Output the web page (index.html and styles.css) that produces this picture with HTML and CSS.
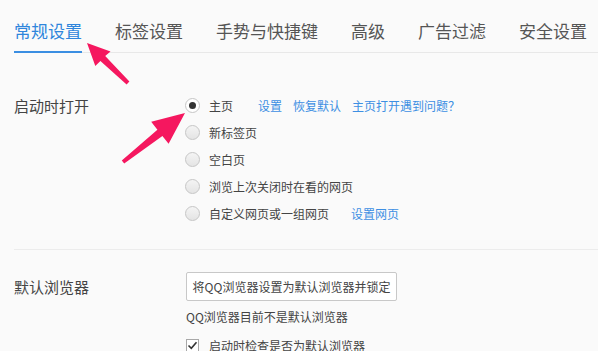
FILE: index.html
```html
<!DOCTYPE html>
<html lang="zh-CN">
<head>
<meta charset="utf-8">
<link rel="stylesheet" href="styles.css">
</head>
<body>
<div class="page">
  <nav class="tabs">
    <span class="tab active">常规设置</span>
    <span class="tab">标签设置</span>
    <span class="tab">手势与快捷键</span>
    <span class="tab">高级</span>
    <span class="tab">广告过滤</span>
    <span class="tab">安全设置</span>
  </nav>

  <section class="section startup">
    <div class="label">启动时打开</div>
    <div class="options">
      <div class="row"><span class="radio checked"></span><span class="opt">主页</span><span class="links"><a class="link">设置</a><a class="link">恢复默认</a><a class="link">主页打开遇到问题？</a></span></div>
      <div class="row"><span class="radio"></span><span class="opt">新标签页</span></div>
      <div class="row"><span class="radio"></span><span class="opt">空白页</span></div>
      <div class="row"><span class="radio"></span><span class="opt">浏览上次关闭时在看的网页</span></div>
      <div class="row"><span class="radio"></span><span class="opt">自定义网页或一组网页</span><span class="links wide"><a class="link">设置网页</a></span></div>
    </div>
  </section>

  <section class="section browser">
    <div class="label">默认浏览器</div>
    <div class="options">
      <button class="btn">将QQ浏览器设置为默认浏览器并锁定</button>
      <div class="note">QQ浏览器目前不是默认浏览器</div>
      <div class="check-row"><span class="checkbox"><svg width="11" height="11" viewBox="0 0 11 11"><path d="M1.5 5.5 L4.3 8.3 L9.5 2.2" fill="none" stroke="#333" stroke-width="1.6"/></svg></span><span class="opt">启动时检查是否为默认浏览器</span></div>
    </div>
  </section>

  <svg class="arrows" width="598" height="351" viewBox="0 0 598 351">
    <polygon fill="#f5175f" points="87,43 110.5,51.5 105.2,55.9 129.4,81.6 126.6,84.4 100.4,60.9 95.3,66"/>
    <polygon fill="#f5175f" points="185,113 168.6,143.8 162.4,135.9 124.2,163.6 121.8,160.4 157.4,129.7 151.2,121.8"/>
  </svg>
</div>
</body>
</html>
```

FILE: styles.css
```css
html, body {
  margin: 0;
  padding: 0;
  background: #fafafa;
}
.page {
  position: relative;
  width: 598px;
  height: 351px;
  overflow: hidden;
  font-family: "Noto Sans CJK SC", "Microsoft YaHei", sans-serif;
  color: #444;
}
.tabs {
  display: flex;
  gap: 33px;
  margin-left: 14px;
  padding-top: 21px;
  border-bottom: 1px solid #e8e8e8;
}
.tab {
  font-size: 17px;
  line-height: 20px;
  color: #555;
  padding-bottom: 10px;
  border-bottom: 2px solid transparent;
  margin-bottom: -1px;
  white-space: nowrap;
}
.tab.active {
  color: #2f86dc;
  border-bottom-color: #3a8ee2;
}
.section {
  display: flex;
  margin-left: 14px;
}
.startup {
  padding-top: 39px;
  padding-bottom: 22px;
  border-bottom: 1px solid #ececec;
}
.browser {
  padding-top: 22px;
}
.label {
  width: 171px;
  flex: none;
  font-size: 15px;
  color: #444;
}
.startup .label {
  line-height: 27px;
}
.browser .label {
  width: 172px;
  line-height: 29px;
}
.options {
  display: flex;
  flex-direction: column;
  align-items: flex-start;
}
.row {
  display: flex;
  align-items: center;
  height: 27px;
}
.radio {
  width: 15px;
  height: 15px;
  border: 1px solid #c6c6c6;
  border-radius: 50%;
  background: linear-gradient(#f4f4f4, #e4e4e4);
  box-sizing: border-box;
  margin-right: 9px;
  display: flex;
  align-items: center;
  justify-content: center;
}
.radio.checked {
  background: #fff;
}
.radio.checked::after {
  content: "";
  width: 7px;
  height: 7px;
  border-radius: 50%;
  background: #333;
}
.opt {
  font-size: 12px;
  color: #444;
  white-space: nowrap;
}
.links {
  display: flex;
  gap: 11px;
  margin-left: 25px;
}
.links.wide {
  margin-left: 22px;
}
.link {
  font-size: 12px;
  color: #3d8fe3;
  white-space: nowrap;
}
.btn {
  width: 211px;
  height: 29px;
  padding: 0;
  border: 1px solid #c8c8c8;
  border-radius: 2px;
  background: #fff;
  font-family: inherit;
  font-size: 12px;
  color: #444;
}
.note {
  font-size: 12px;
  line-height: 20px;
  margin-top: 6px;
  color: #444;
}
.check-row {
  display: flex;
  align-items: center;
  margin-top: 8px;
  height: 20px;
}
.checkbox {
  width: 13px;
  height: 13px;
  border: 1px solid #a8a8a8;
  background: #fff;
  box-sizing: border-box;
  margin-right: 10px;
  display: flex;
  align-items: center;
  justify-content: center;
}
.arrows {
  position: absolute;
  left: 0;
  top: 0;
  pointer-events: none;
}
```
